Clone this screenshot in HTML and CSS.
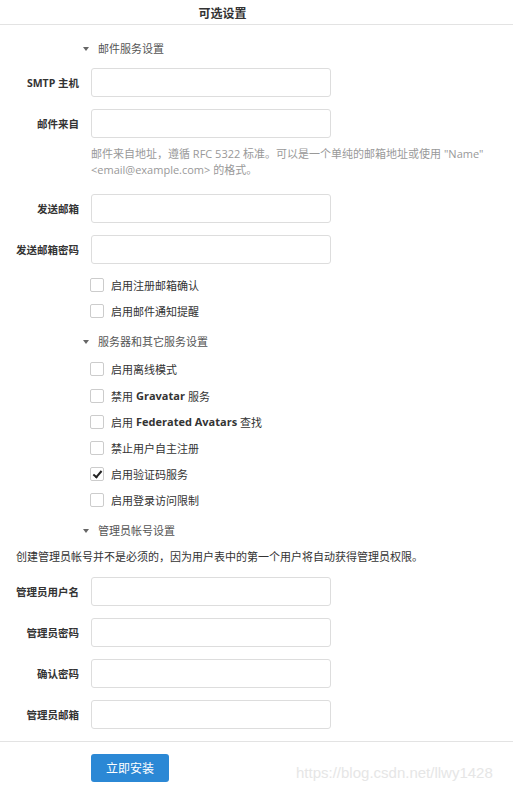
FILE: index.html
```html
<!DOCTYPE html>
<html lang="zh-CN">
<head>
    <meta charset="UTF-8">
    <title>可选设置</title>
    <link rel="stylesheet" href="styles.css">
</head>
<body>
    <div class="page">
        <h2 class="title">可选设置</h2>

        <div class="section-head mail"><span class="caret"></span>邮件服务设置</div>
        <div class="field">
            <label>SMTP 主机</label>
            <input type="text">
        </div>
        <div class="field">
            <label>邮件来自</label>
            <input type="text">
        </div>
        <p class="help">邮件来自地址，遵循 RFC 5322 标准。可以是一个单纯的邮箱地址或使用 "Name" &lt;email@example.com&gt; 的格式。</p>
        <div class="field">
            <label>发送邮箱</label>
            <input type="text">
        </div>
        <div class="field">
            <label>发送邮箱密码</label>
            <input type="password">
        </div>
        <div class="checks mail-checks">
            <div class="check"><span class="box"></span>启用注册邮箱确认</div>
            <div class="check"><span class="box"></span>启用邮件通知提醒</div>
        </div>

        <div class="section-head server"><span class="caret"></span>服务器和其它服务设置</div>
        <div class="checks">
            <div class="check"><span class="box"></span>启用离线模式</div>
            <div class="check"><span class="box"></span>禁用 <b>Gravatar</b> 服务</div>
            <div class="check"><span class="box"></span>启用 <b>Federated Avatars</b> 查找</div>
            <div class="check"><span class="box"></span>禁止用户自主注册</div>
            <div class="check"><span class="box checked"></span>启用验证码服务</div>
            <div class="check"><span class="box"></span>启用登录访问限制</div>
        </div>

        <div class="section-head admin"><span class="caret"></span>管理员帐号设置</div>
        <p class="desc">创建管理员帐号并不是必须的，因为用户表中的第一个用户将自动获得管理员权限。</p>
        <div class="field">
            <label>管理员用户名</label>
            <input type="text">
        </div>
        <div class="field">
            <label>管理员密码</label>
            <input type="password">
        </div>
        <div class="field">
            <label>确认密码</label>
            <input type="password">
        </div>
        <div class="field">
            <label>管理员邮箱</label>
            <input type="text">
        </div>

        <div class="actions">
            <button class="btn">立即安装</button>
        </div>
        <span class="watermark">https://blog.csdn.net/llwy1428</span>
    </div>
</body>
</html>
```

FILE: styles.css
```css
* {
    box-sizing: border-box;
    margin: 0;
    padding: 0;
}

body {
    font-family: 'Open Sans', 'Noto Sans CJK SC', sans-serif;
    font-size: 11px;
    color: #333;
    background-color: #fff;
}

.page {
    position: relative;
    width: 513px;
    height: 795px;
    overflow: hidden;
}

.title {
    width: 100%;
    text-align: center;
    font-size: 12px;
    font-weight: bold;
    line-height: 16px;
    padding: 6px 68px 2px 0;
    border-bottom: 1px solid #e3e3e3;
}

/* Titulos das secoes */
.section-head {
    display: flex;
    align-items: center;
    line-height: 16px;
    padding-left: 83px;
    color: #555;
}

.section-head.mail {
    margin: 16px 0 11px;
}

.section-head.server {
    margin: 10px 0 6px;
}

.section-head.admin {
    margin: 9px 0 0;
}

.caret {
    width: 0;
    height: 0;
    border-left: 3px solid transparent;
    border-right: 3px solid transparent;
    border-top: 4px solid #666;
    margin-right: 9px;
}

.field {
    display: grid;
    grid-template-columns: 79px 240px;
    column-gap: 12px;
    align-items: center;
    margin-bottom: 12px;
}

.field label {
    text-align: right;
    font-weight: bold;
    font-size: 10.5px;
    color: #333;
}

.field input {
    height: 29px;
    border: 1px solid #ddd;
    border-radius: 3px;
    background-color: #fff;
}

.help {
    margin: -4px 0 16px 91px;
    padding-right: 20px;
    line-height: 16px;
    color: #999;
}

.checks {
    margin-left: 90px;
}

.checks.mail-checks {
    margin-top: -4px;
}

.check {
    display: flex;
    align-items: center;
    height: 26.2px;
    color: #333;
}

.check b {
    margin: 0 3px;
}

.box {
    width: 14px;
    height: 14px;
    border: 1px solid #ccc;
    border-radius: 2px;
    margin-right: 7px;
    position: relative;
}

.box.checked::after {
    content: '';
    position: absolute;
    left: 4px;
    top: 1px;
    width: 3px;
    height: 7px;
    border-right: 2px solid #222;
    border-bottom: 2px solid #222;
    transform: rotate(40deg);
}

.desc {
    padding-left: 16px;
    line-height: 16px;
    margin: 10px 0 12px;
}

.actions {
    border-top: 1px solid #e3e3e3;
    margin-top: 1px;
    padding: 12px 0 0 91px;
}

.btn {
    width: 78px;
    height: 28px;
    border: none;
    border-radius: 3px;
    background-color: #2b88d5;
    color: #fff;
    font-family: 'Open Sans', 'Noto Sans CJK SC', sans-serif;
    font-size: 12px;
}

.watermark {
    position: absolute;
    left: 296px;
    top: 764px;
    font-family: 'Liberation Sans', sans-serif;
    font-size: 15px;
    color: #e6e6e6;
}
```
